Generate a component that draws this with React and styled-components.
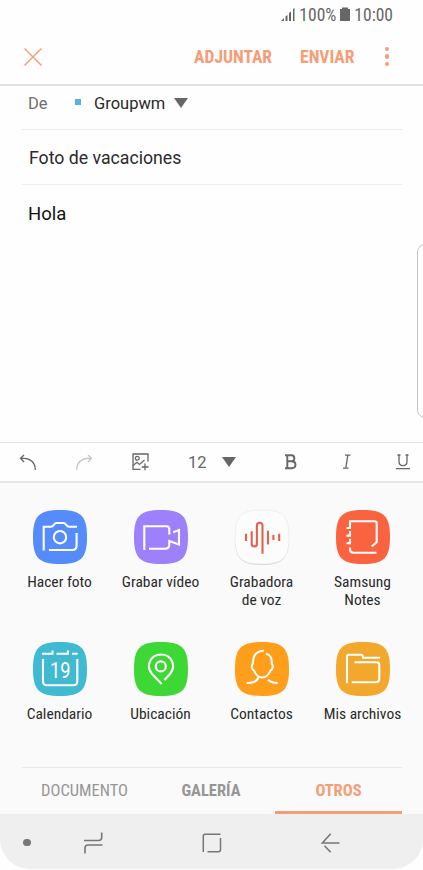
import styled, { createGlobalStyle } from "styled-components";

const GlobalStyle = createGlobalStyle`
  * {
    box-sizing: border-box;
  }
  body {
    margin: 0;
    background: #ffffff;
    font-family: Roboto, "Liberation Sans", sans-serif;
  }
  svg {
    display: block;
    fill: none;
    flex-shrink: 0;
  }
`;

const Screen = styled.div`
  position: relative;
  width: 423px;
  height: 870px;
  display: flex;
  flex-direction: column;
  background: #fefefe;
  overflow: hidden;
`;

const StatusBar = styled.div`
  height: 29px;
  padding-right: 30px;
  display: flex;
  align-items: center;
  justify-content: flex-end;
  gap: 4px;
  font-size: 17.5px;
  font-stretch: 75%;
  color: #666666;
`;

const Header = styled.div`
  height: 57px;
  padding: 0 34px 0 24px;
  display: flex;
  align-items: center;
  border-bottom: 2px solid #e0e0e0;
`;

const HeaderAction = styled.div`
  margin-left: ${(props) => props.$space};
  font-size: 17.5px;
  font-weight: 700;
  font-stretch: 75%;
  color: #f69c76;
`;

const Dots = styled.div`
  margin-left: 30px;
  display: flex;
  flex-direction: column;
  gap: 2.8px;
`;

const Dot = styled.div`
  width: 4.5px;
  height: 4.5px;
  border-radius: 50%;
  background: #f69c76;
`;

const Fields = styled.div`
  height: 356px;
  padding: 0 21px 0 22px;
`;

const Field = styled.div`
  height: ${(props) => props.$height};
  padding: ${(props) => props.$padding};
  display: flex;
  align-items: center;
  border-bottom: ${(props) => (props.$last ? "none" : "1px solid #ececec")};
  font-size: ${(props) => props.$size};
  color: ${(props) => props.$color};
`;

const FromLabel = styled.div`
  width: 47px;
  color: #6e6e6e;
`;

const AccountMark = styled.div`
  width: 6px;
  height: 6px;
  margin: 0 13px 2px 0;
  background: #53b4dc;
`;

const Caret = styled.div`
  width: 0;
  height: 0;
  margin-left: ${(props) => props.$space};
  border-left: 7.5px solid transparent;
  border-right: 7.5px solid transparent;
  border-top: 10px solid #666666;
`;

/* Edge panel handle, lies over the message body */
const EdgeHandle = styled.div`
  position: absolute;
  top: 244px;
  right: -10px;
  width: 16px;
  height: 174px;
  border: 1px solid #c4c4c4;
  border-radius: 8px;
  background: #ffffff;
`;

const Toolbar = styled.div`
  height: 41px;
  padding: 0 12px 0 19px;
  display: flex;
  align-items: center;
  border-top: 1px solid #e4e4e4;
  border-bottom: 2px solid #e6e6e6;
  color: #666666;
`;

const Tool = styled.div`
  width: ${(props) => props.$width};
  display: flex;
  align-items: center;
  font-size: 16.5px;
`;

const Panel = styled.div`
  height: 331px;
  padding: 26px 9px 0;
  background: #fafafa;
`;

const Grid = styled.div`
  height: 258px;
  display: grid;
  grid-template-columns: repeat(4, 101px);
  grid-template-rows: 132px 126px;
`;

const AppItem = styled.div`
  display: flex;
  flex-direction: column;
  align-items: center;
`;

const Label = styled.div`
  margin-top: 8px;
  font-size: 15.5px;
  font-stretch: 75%;
  line-height: 18px;
  text-align: center;
  white-space: pre-line;
  color: #2a2a2a;
`;

const Tabs = styled.div`
  height: 47px;
  margin: 0 12px 0 13px;
  display: grid;
  grid-template-columns: 125px 128px 127px;
  border-top: 1px solid #e8e8e8;
`;

const Tab = styled.div`
  display: flex;
  align-items: center;
  justify-content: center;
  padding-top: ${(props) => (props.$active ? "2px" : "0")};
  padding-bottom: ${(props) => (props.$active ? "0" : "1px")};
  border-bottom: ${(props) => (props.$active ? "3px solid #f69c76" : "none")};
  font-size: 16.5px;
  font-stretch: 75%;
  font-weight: ${(props) => (props.$bold ? 700 : 400)};
  color: ${(props) => (props.$active ? "#f69c76" : "#969696")};
`;

const NavBar = styled.div`
  height: 55px;
  padding: 2px 83px 0 23px;
  display: flex;
  align-items: center;
  justify-content: space-between;
  border-radius: 0 0 30px 30px;
  background: #efefef;
`;

const NavDot = styled.div`
  width: 7.5px;
  height: 7.5px;
  margin-right: -46px;
  border-radius: 50%;
  background: #777777;
`;

const Tile = ({ color, outline, stroke = "#ffffff", children }) => (
  <svg width="56" height="56" viewBox="-1 -1 56 56">
    {outline && (
      <path
        d="M0 28C0 7 7 1 27 1S54 7 54 28S47 55 27 55S0 49 0 28Z"
        fill="#d2d2d2"
      />
    )}
    <path
      d="M0 27C0 6 6 0 27 0S54 6 54 27S48 54 27 54S0 48 0 27Z"
      fill={color}
      stroke={outline ? "#e8e8e8" : "none"}
      strokeWidth="0.7"
    />
    <g stroke={stroke} strokeWidth="2.1">
      {children}
    </g>
  </svg>
);

const apps = [
  {
    label: "Hacer foto",
    color: "#558bfb",
    icon: (
      <>
        <path d="M10.7 40.5V16.8H18C21 16.8 20.5 13 23.5 13H30.5C33.5 13 33 16.8 36 16.8H44" />
        <path d="M43.6 23V35.5Q43.6 40 39 40H16" />
        <circle cx="27" cy="27.2" r="6.2" />
      </>
    ),
  },
  {
    label: "Grabar vídeo",
    color: "#9d80fb",
    icon: (
      <>
        <path d="M10.3 40V16.2H32.5Q35.3 16.2 35.3 19V24.5" />
        <path d="M39.2 22.3L45 20V34.5L35.3 31V34.5Q35.3 38.7 31 38.7H15" />
      </>
    ),
  },
  {
    label: "Grabadora\nde voz",
    color: "#fcfcfc",
    outline: true,
    stroke: "#e5604d",
    icon: (
      <>
        <path d="M11 23.7V31M33 20.7V34.5M38.4 25V30M44.2 23.7V31" />
        <path d="M16.7 21.3V33.7A2.6 2.8 0 0 0 21.9 33.7V15.6A2.8 2.9 0 0 1 27.5 15.6V43.7" />
      </>
    ),
  },
  {
    label: "Samsung\nNotes",
    color: "#fa6340",
    icon: (
      <>
        <path d="M10.5 18H14V11.3H38.5Q40.7 11.3 40.7 13.5V32L35.7 36.5" />
        <path d="M14 21V25.6H10.5M14 28.7V33.2H10.5" />
        <path d="M14 37.5V39.5Q14 42.7 17.5 42.7H40.5" />
      </>
    ),
  },
  {
    label: "Calendario",
    color: "#3fbad0",
    icon: (
      <>
        <path d="M9 11.8H19.5V8.5M23.5 11.8H35V8.5M39 11.8H44.7" />
        <path d="M10 17V39.3Q10 43.3 14 43.3H40.3Q44.3 43.3 44.3 39.3V17" />
        <text
          x="27.2"
          y="35.5"
          fontSize="21.5"
          textAnchor="middle"
          textLength="20.5"
          lengthAdjust="spacingAndGlyphs"
          fontWeight="400"
          fill="#ffffff"
          stroke="none"
        >
          19
        </text>
      </>
    ),
  },
  {
    label: "Ubicación",
    color: "#3dd835",
    icon: (
      <>
        <path d="M30.5 38L36 32C43 23.5 37 12.5 27 12.5C17 12.5 11 23.5 18 32L27.7 42" />
        <circle cx="26.8" cy="24.4" r="5" />
      </>
    ),
  },
  {
    label: "Contactos",
    color: "#ff9e1b",
    icon: (
      <>
        <path d="M28.7 8.7C21 9 17.5 14 18 21.5C16 23.5 16.5 27.5 19 28.5C20.5 32.5 24 35.5 27.3 35.5C30.5 35.5 34 32.5 35.5 28.5C38 27.5 38.5 23.5 36.7 21.5C37.2 16.5 35 12.5 31 11.5" />
        <path d="M11.7 41C18.5 41 22.7 39.5 23.5 34.5M33 37.7C35.5 40 38.5 41 42.7 41" />
      </>
    ),
  },
  {
    label: "Mis archivos",
    color: "#f2a72d",
    icon: (
      <>
        <path d="M11 41.3V14.5Q11 12.7 13 12.7H25.5Q26.8 12.7 27 15.8H44" />
        <path d="M18.5 20.3H40.5Q43.3 20.3 43.3 23V36.5Q43.3 40.2 39.5 40.2H15.7" />
      </>
    ),
  },
];

const App = () => (
  <>
    <GlobalStyle />
    <Screen>
      <StatusBar>
        <svg width="14" height="14" viewBox="0 0 14 14">
          <path
            d="M0 13L3 10V13ZM4.5 13V8.5L6.5 7V13ZM8 13V5L10 3.5V13ZM12 13V1L13.5 0V13Z"
            fill="#666666"
          />
        </svg>
        100%
        <svg width="10" height="15" viewBox="0 0 10 15">
          <path d="M0 2H2V0.5H8V2H10V14H0Z" fill="#666666" />
        </svg>
        10:00
      </StatusBar>
      <Header>
        <svg width="18" height="18" viewBox="0 0 18 18">
          <path
            d="M0.5 0.5L17.5 17.5M17.5 0.5L0.5 17.5"
            stroke="#f69c76"
            strokeWidth="1.4"
          />
        </svg>
        <HeaderAction $space="auto">ADJUNTAR</HeaderAction>
        <HeaderAction $space="28px">ENVIAR</HeaderAction>
        <Dots>
          <Dot />
          <Dot />
          <Dot />
        </Dots>
      </Header>
      <Fields>
        <Field
          $height="44px"
          $padding="0 0 9px 6px"
          $size="16.5px"
          $color="#2a2a2a"
        >
          <FromLabel>De</FromLabel>
          <AccountMark />
          Groupwm
          <Caret $space="9px" />
        </Field>
        <Field
          $height="55px"
          $padding="2px 0 0 7px"
          $size="17.7px"
          $color="#2a2a2a"
        >
          Foto de vacaciones
        </Field>
        <Field
          $last
          $height="56px"
          $padding="1px 0 0 6px"
          $size="18.5px"
          $color="#111111"
        >
          Hola
        </Field>
      </Fields>
      <EdgeHandle />
      <Toolbar>
        <Tool $width="57px">
          <svg width="18" height="17" viewBox="0 0 18 17">
            <path
              d="M5 1L1.5 4.3L5 8M1.5 4.3H5C11 4.3 16.3 8.5 16.3 16"
              stroke="#666666"
              strokeWidth="1.3"
            />
          </svg>
        </Tool>
        <Tool $width="56px">
          <svg width="18" height="17" viewBox="0 0 18 17">
            <path
              d="M12 1L15.5 4.3L12 8M15.5 4.3H12C6 4.3 0.7 8.5 0.7 16"
              stroke="#c4c4c4"
              strokeWidth="1.3"
            />
          </svg>
        </Tool>
        <Tool $width="56px">
          <svg width="18" height="18" viewBox="0 0 18 18">
            <g stroke="#666666" strokeWidth="1.3">
              <path d="M8.5 16.3H1V1H16V8.5" />
              <circle cx="5.3" cy="5.3" r="1.9" />
              <path d="M1 12.5L5 9.3L7.5 11.5L12.5 7" />
              <path d="M13 10.5V17.3M9.7 14H16.5" />
            </g>
          </svg>
        </Tool>
        <Tool $width="97px">
          12
          <Caret $space="15px" />
        </Tool>
        <Tool $width="58px">
          <svg width="12" height="16" viewBox="0 0 12 16">
            <path
              d="M0 1.2H6.5C10.3 1.2 10.3 7.3 6.5 7.3H2.3M6.5 7.3C11.8 7.3 11.8 14.2 6.5 14.2H0M2.3 1V14"
              stroke="#666666"
              strokeWidth="1.9"
            />
          </svg>
        </Tool>
        <Tool $width="53px">
          <svg width="8" height="16" viewBox="0 0 8 16">
            <path
              d="M2 1.2H7.5M0 14.2H5.5M4.8 1.2L2.8 14.2"
              stroke="#666666"
              strokeWidth="1.3"
            />
          </svg>
        </Tool>
        <Tool $width="14px">
          <svg width="14" height="16" viewBox="0 0 14 16">
            <path
              d="M1.5 1H4.5M9.5 1H12.5M3 1V7.5C3 13 11 13 11 7.5V1M0 14.7H14"
              stroke="#666666"
              strokeWidth="1.3"
            />
          </svg>
        </Tool>
      </Toolbar>
      <Panel>
        <Grid>
          {apps.map((app) => (
            <AppItem key={app.label}>
              <Tile
                color={app.color}
                outline={app.outline}
                stroke={app.stroke}
              >
                {app.icon}
              </Tile>
              <Label>{app.label}</Label>
            </AppItem>
          ))}
        </Grid>
        <Tabs>
          <Tab>DOCUMENTO</Tab>
          <Tab $bold>GALERÍA</Tab>
          <Tab $bold $active>
            OTROS
          </Tab>
        </Tabs>
      </Panel>
      <NavBar>
        <NavDot />
        <svg width="19" height="22" viewBox="0 0 19 22">
          <path
            d="M0 8.5H14.5Q17.7 8.5 17.7 5.5V0.5M18.5 13H4Q1 13 1 16V21.5"
            stroke="#777777"
            strokeWidth="1.6"
          />
        </svg>
        <svg width="20" height="20" viewBox="0 0 20 20">
          <path
            d="M1.3 19V3Q1.3 1.2 3 1.2H18.5M18.5 5V16.5Q18.5 18.7 16.5 18.7H5.5"
            stroke="#777777"
            strokeWidth="1.5"
          />
        </svg>
        <svg width="19" height="20" viewBox="0 0 19 20">
          <path
            d="M18.5 10H1.3L9.7 0.7M3.5 12.7L9.7 19.3"
            stroke="#777777"
            strokeWidth="1.6"
          />
        </svg>
      </NavBar>
    </Screen>
  </>
);

export default App;
